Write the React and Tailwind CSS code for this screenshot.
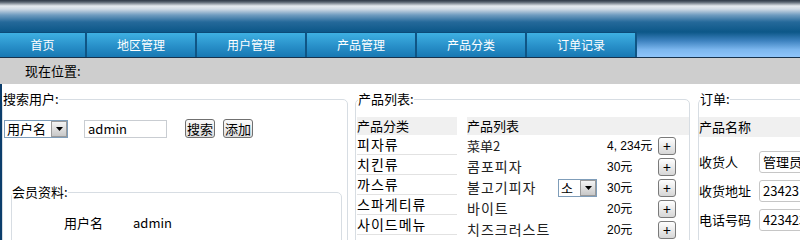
import React from 'react';

const tabs = ['首页', '地区管理', '用户管理', '产品管理', '产品分类', '订单记录'];
const categories = ['피자류', '치킨류', '까스류', '스파게티류', '사이드메뉴'];
const products = [
  { name: '菜单2', price: '4, 234元' },
  { name: '콤포피자', price: '30元', ko: true },
  { name: '불고기피자', price: '30元', size: '소', ko: true },
  { name: '바이트', price: '20元', ko: true },
  { name: '치즈크러스트', price: '20元', ko: true },
];

function Arrow() {
  return (
    <span className="flex h-full w-[16px] items-center justify-center border border-[#9a9a9a] bg-[linear-gradient(to_bottom,#f4f4f4,#c8c8c8)]">
      <svg width="7" height="4" viewBox="0 0 7 4"><path d="M0 0h7L3.5 4z" fill="#000" /></svg>
    </span>
  );
}

function Select({ value, width }) {
  return (
    <div className={`flex h-[18px] items-center border border-[#7f9db9] bg-white ${width}`}>
      <span className="flex-1 pl-[2px] text-[13px] leading-none">{value}</span>
      <Arrow />
    </div>
  );
}

function Button({ children }) {
  return (
    <button className="h-[19px] rounded-[3px] border border-[#707070] bg-[linear-gradient(to_bottom,#fafafa,#dedede)] px-[1px] text-[13px] leading-none">
      {children}
    </button>
  );
}

function Plus() {
  return (
    <span className="flex h-[18px] w-[18px] items-center justify-center rounded-[3px] border border-[#7a7a7a] bg-[linear-gradient(to_bottom,#ffffff,#d6d6d6)] text-[14px] leading-none">
      +
    </span>
  );
}

export default function App() {
  return (
    <div className="h-[240px] w-[800px] overflow-hidden bg-white font-['Noto_Sans_CJK_SC','Noto_Sans_CJK_KR',sans-serif] text-[12px] text-black">
      {/* header band */}
      <div className="h-[32px] bg-[linear-gradient(to_bottom,#2e3846_0px,#56616e_2px,#e6ebf0_6px,#d2dce6_9px,#6f9cc0_15px,#25699a_22px,#0c5788_32px)]" />

      {/* nav */}
      <div className="flex h-[26px] border-b border-[#17324c]">
        {tabs.map((t, i) => (
          <div
            key={t}
            className={`flex items-center justify-center border-r-2 border-t border-r-[#0f5585] border-t-[#0c4b78] bg-[linear-gradient(to_bottom,#3eb0e2,#2a92cb_50%,#1878b3)] text-[12px] text-white ${i === 0 ? 'w-[87px]' : 'w-[110px]'}`}
          >
            {t}
          </div>
        ))}
        <div className="flex-1 bg-[linear-gradient(to_bottom,#0c5788,#3d82bf_35%,#7bb6ee_70%,#8fc5fa)]" />
      </div>

      {/* breadcrumb */}
      <div className="flex h-[26px] items-center bg-[#cecece] pl-[25px] text-[13px]">现在位置:</div>

      {/* main */}
      <div className="flex h-[200px] border-l-2 border-[#0b3d6b] pt-[7px]">
        {/* search users */}
        <fieldset className="h-[220px] w-[346px] shrink-0 rounded-[5px] border border-[#d7dde3] px-0">
          <legend className="text-[13px] leading-[16px]">搜索用户:</legend>
          <div className="mt-[12px] flex items-center pl-[1px]">
            <Select value="用户名" width="w-[64px]" />
            <div className="ml-[16px] flex h-[18px] w-[83px] items-center border border-[#c9cdd2] pl-[3px] text-[13px]">admin</div>
            <div className="ml-[18px] flex gap-[8px]">
              <Button>搜索</Button>
              <Button>添加</Button>
            </div>
          </div>

          <fieldset className="ml-[8px] mr-[5px] mt-[46px] h-[80px] rounded-[5px] border border-[#d7dde3]">
            <legend className="text-[13px] leading-[16px]">会员资料:</legend>
            <div className="flex pt-[15px] text-[13px] leading-[16px]">
              <span className="ml-[52px] w-[69px]">用户名</span>
              <span>admin</span>
            </div>
          </fieldset>
        </fieldset>

        {/* product list */}
        <fieldset className="ml-[7px] h-[220px] w-[335px] shrink-0 rounded-[5px] border border-[#d7dde3] pl-[1px]">
          <legend className="ml-[1px] text-[13px] leading-[16px]">产品列表:</legend>
          <div className="mt-[10px] flex">
            <div className="w-[100px]">
              <div className="flex h-[18px] items-center bg-[#f0f0f0] text-[13px]">产品分类</div>
              {categories.map(c => (
                <div key={c} className="flex h-[20px] items-center border-b border-[#e2e2e2] text-[14px] tracking-[1px]">
                  {c}
                </div>
              ))}
            </div>
            <div className="ml-[10px] flex-1">
              <div className="flex h-[18px] items-center bg-[#f0f0f0] text-[13px]">产品列表</div>
              {products.map(p => (
                <div key={p.name} className="flex h-[21px] items-center text-[13px]">
                  <span className={`w-[91px] whitespace-nowrap text-[#222] ${p.ko ? 'text-[14px] tracking-[1px]' : ''}`}>{p.name}</span>
                  <span className="w-[49px]">
                    {p.size && <Select value={p.size} width="w-[39px]" />}
                  </span>
                  <span className="w-[51px] font-['Liberation_Sans','Noto_Sans_CJK_SC',sans-serif] text-[12px]">{p.price}</span>
                  <Plus />
                </div>
              ))}
            </div>
          </div>
        </fieldset>

        {/* order */}
        <fieldset className="ml-[8px] h-[220px] flex-1 rounded-l-[5px] border border-r-0 border-[#d7dde3]">
          <legend className="ml-[1px] text-[13px] leading-[16px]">订单:</legend>
          <div className="mt-[10px] flex h-[20px] items-center bg-[#f0f0f0] text-[13px]">产品名称</div>
          {[
            ['收货人', '管理员'],
            ['收货地址', '23423'],
            ['电话号码', '423423'],
          ].map(([label, value], i) => (
            <div key={label} className={`flex h-[22px] items-center text-[13px] ${i === 0 ? 'mt-[14px]' : 'mt-[7px]'}`}>
              <span className="w-[60px]">{label}</span>
              <div className="flex h-[22px] w-[80px] items-center rounded-[3px] border border-[#c6c6c6] pl-[3px] text-[13px]">
                {value}
              </div>
            </div>
          ))}
        </fieldset>
      </div>
    </div>
  );
}
